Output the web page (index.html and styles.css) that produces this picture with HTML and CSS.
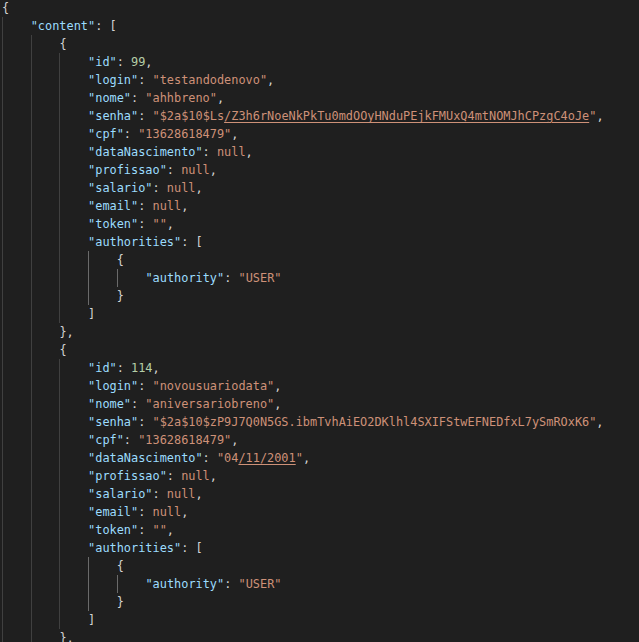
FILE: index.html
```html
<!DOCTYPE html>
<html>
<head>
<meta charset="utf-8">
<link rel="stylesheet" href="styles.css">
</head>
<body>
<div class="code">
<div class="ln"><span class="p">{</span></div>
<div class="ln"><span class="g"></span><span class="k">"content"</span><span class="p">: [</span></div>
<div class="ln"><span class="g"></span><span class="g"></span><span class="p">{</span></div>
<div class="ln"><span class="g"></span><span class="g"></span><span class="g"></span><span class="k">"id"</span><span class="p">: </span><span class="n">99</span><span class="p">,</span></div>
<div class="ln"><span class="g"></span><span class="g"></span><span class="g"></span><span class="k">"login"</span><span class="p">: </span><span class="s">"testandodenovo"</span><span class="p">,</span></div>
<div class="ln"><span class="g"></span><span class="g"></span><span class="g"></span><span class="k">"nome"</span><span class="p">: </span><span class="s">"ahhbreno"</span><span class="p">,</span></div>
<div class="ln"><span class="g"></span><span class="g"></span><span class="g"></span><span class="k">"senha"</span><span class="p">: </span><span class="s">"$2a$10$Ls<span class="u">/Z3h6rNoeNkPkTu0mdOOyHNduPEjkFMUxQ4mtNOMJhCPzgC4oJe</span>"</span><span class="p">,</span></div>
<div class="ln"><span class="g"></span><span class="g"></span><span class="g"></span><span class="k">"cpf"</span><span class="p">: </span><span class="s">"13628618479"</span><span class="p">,</span></div>
<div class="ln"><span class="g"></span><span class="g"></span><span class="g"></span><span class="k">"dataNascimento"</span><span class="p">: </span><span class="s">null</span><span class="p">,</span></div>
<div class="ln"><span class="g"></span><span class="g"></span><span class="g"></span><span class="k">"profissao"</span><span class="p">: </span><span class="s">null</span><span class="p">,</span></div>
<div class="ln"><span class="g"></span><span class="g"></span><span class="g"></span><span class="k">"salario"</span><span class="p">: </span><span class="s">null</span><span class="p">,</span></div>
<div class="ln"><span class="g"></span><span class="g"></span><span class="g"></span><span class="k">"email"</span><span class="p">: </span><span class="s">null</span><span class="p">,</span></div>
<div class="ln"><span class="g"></span><span class="g"></span><span class="g"></span><span class="k">"token"</span><span class="p">: </span><span class="s">""</span><span class="p">,</span></div>
<div class="ln"><span class="g"></span><span class="g"></span><span class="g"></span><span class="k">"authorities"</span><span class="p">: [</span></div>
<div class="ln"><span class="g"></span><span class="g"></span><span class="g"></span><span class="g b"></span><span class="p">{</span></div>
<div class="ln"><span class="g"></span><span class="g"></span><span class="g"></span><span class="g b"></span><span class="g b"></span><span class="k">"authority"</span><span class="p">: </span><span class="s">"USER"</span></div>
<div class="ln"><span class="g"></span><span class="g"></span><span class="g"></span><span class="g b"></span><span class="p">}</span></div>
<div class="ln"><span class="g"></span><span class="g"></span><span class="g"></span><span class="p">]</span></div>
<div class="ln"><span class="g"></span><span class="g"></span><span class="p">},</span></div>
<div class="ln"><span class="g"></span><span class="g"></span><span class="p">{</span></div>
<div class="ln"><span class="g"></span><span class="g"></span><span class="g"></span><span class="k">"id"</span><span class="p">: </span><span class="n">114</span><span class="p">,</span></div>
<div class="ln"><span class="g"></span><span class="g"></span><span class="g"></span><span class="k">"login"</span><span class="p">: </span><span class="s">"novousuariodata"</span><span class="p">,</span></div>
<div class="ln"><span class="g"></span><span class="g"></span><span class="g"></span><span class="k">"nome"</span><span class="p">: </span><span class="s">"aniversariobreno"</span><span class="p">,</span></div>
<div class="ln"><span class="g"></span><span class="g"></span><span class="g"></span><span class="k">"senha"</span><span class="p">: </span><span class="s">"$2a$10$zP9J7Q0N5GS.ibmTvhAiEO2DKlhl4SXIFStwEFNEDfxL7ySmROxK6"</span><span class="p">,</span></div>
<div class="ln"><span class="g"></span><span class="g"></span><span class="g"></span><span class="k">"cpf"</span><span class="p">: </span><span class="s">"13628618479"</span><span class="p">,</span></div>
<div class="ln"><span class="g"></span><span class="g"></span><span class="g"></span><span class="k">"dataNascimento"</span><span class="p">: </span><span class="s">"04<span class="u">/11/2001</span>"</span><span class="p">,</span></div>
<div class="ln"><span class="g"></span><span class="g"></span><span class="g"></span><span class="k">"profissao"</span><span class="p">: </span><span class="s">null</span><span class="p">,</span></div>
<div class="ln"><span class="g"></span><span class="g"></span><span class="g"></span><span class="k">"salario"</span><span class="p">: </span><span class="s">null</span><span class="p">,</span></div>
<div class="ln"><span class="g"></span><span class="g"></span><span class="g"></span><span class="k">"email"</span><span class="p">: </span><span class="s">null</span><span class="p">,</span></div>
<div class="ln"><span class="g"></span><span class="g"></span><span class="g"></span><span class="k">"token"</span><span class="p">: </span><span class="s">""</span><span class="p">,</span></div>
<div class="ln"><span class="g"></span><span class="g"></span><span class="g"></span><span class="k">"authorities"</span><span class="p">: [</span></div>
<div class="ln"><span class="g"></span><span class="g"></span><span class="g"></span><span class="g b"></span><span class="p">{</span></div>
<div class="ln"><span class="g"></span><span class="g"></span><span class="g"></span><span class="g b"></span><span class="g b"></span><span class="k">"authority"</span><span class="p">: </span><span class="s">"USER"</span></div>
<div class="ln"><span class="g"></span><span class="g"></span><span class="g"></span><span class="g b"></span><span class="p">}</span></div>
<div class="ln"><span class="g"></span><span class="g"></span><span class="g"></span><span class="p">]</span></div>
<div class="ln"><span class="g"></span><span class="g"></span><span class="p">},</span></div>
</div>
</body>
</html>
```
FILE: styles.css
```css
html, body {
  margin: 0;
  padding: 0;
  background: #1f1f1f;
  height: 100%;
  overflow: hidden;
}
.code {
  margin-top: -1px;
  padding-left: 2px;
  font-family: "DejaVu Sans Mono", "Liberation Mono", monospace;
  font-size: 11.9px;
  color: #d4d4d4;
}
.ln {
  display: flex;
  height: 18px;
  line-height: 18px;
  white-space: pre;
}
.g {
  flex: none;
  width: 28.7px;
  height: 18px;
  box-sizing: border-box;
  border-left: 1px solid #404040;
}
.g.b {
  border-left-color: #6a6a6a;
}
.p { color: #d4d4d4; }
.k { color: #9cdcfe; }
.s { color: #ce9178; }
.n { color: #b5cea8; }
.u {
  text-decoration: underline;
  text-underline-offset: 2px;
}
```
